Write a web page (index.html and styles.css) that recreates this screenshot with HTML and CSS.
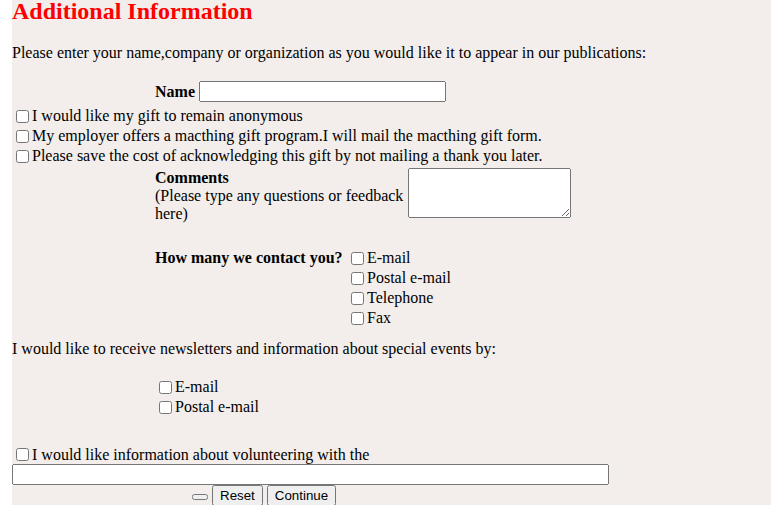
FILE: index.html
```html
<!DOCTYPE html>
<html>
<head>
<meta charset="utf-8">
<title>Additional Information</title>
<link rel="stylesheet" href="styles.css">
</head>
<body>
<form class="page">
  <h2 class="title">Additional Information</h2>
  <p class="intro">Please enter your name,company or organization as you would like it to appear in our publications:</p>

  <div class="name-row">
    <label class="name-label" for="name">Name</label>
    <input class="name-input" type="text" id="name">
  </div>

  <div class="checks">
    <label class="check-row"><input type="checkbox">I would like my gift to remain anonymous</label>
    <label class="check-row"><input type="checkbox">My employer offers a macthing gift program.I will mail the macthing gift form.</label>
    <label class="check-row"><input type="checkbox">Please save the cost of acknowledging this gift by not mailing a thank you later.</label>
  </div>

  <div class="comments-row">
    <div class="comments-label"><b>Comments</b><br>(Please type any questions or feedback here)</div>
    <textarea class="comments-input"></textarea>
  </div>

  <div class="contact">
    <div class="contact-label">How many we contact you?</div>
    <div class="contact-options">
      <label class="check-row"><input type="checkbox">E-mail</label>
      <label class="check-row"><input type="checkbox">Postal e-mail</label>
      <label class="check-row"><input type="checkbox">Telephone</label>
      <label class="check-row"><input type="checkbox">Fax</label>
    </div>
  </div>

  <p class="news">I would like to receive newsletters and information about special events by:</p>
  <div class="news-options">
    <label class="check-row"><input type="checkbox">E-mail</label>
    <label class="check-row"><input type="checkbox">Postal e-mail</label>
  </div>

  <label class="check-row volunteer"><input type="checkbox">I would like information about volunteering with the</label>
  <input class="wide-input" type="text">

  <div class="buttons">
    <button type="button" class="btn btn-empty"></button>
    <button type="reset" class="btn">Reset</button>
    <button type="submit" class="btn">Continue</button>
  </div>
</form>
</body>
</html>
```

FILE: styles.css
```css
html, body {
  margin: 0;
  padding: 0;
  background: #ffffff;
}

body {
  font-family: "Liberation Serif", "Times New Roman", serif;
  font-size: 16px;
  color: #000;
}

.page {
  margin-left: 12px;
  background: #f3eeeb;
  padding-bottom: 0;
}

.title {
  margin: 0 0 22px;
  font-size: 24px;
  line-height: 22px;
  font-weight: bold;
  color: #ff0000;
}

.intro {
  margin: 0;
  line-height: 18px;
}

.name-row {
  display: flex;
  align-items: center;
  margin-top: 19px;
  padding-left: 143px;
}

.name-label {
  font-weight: bold;
}

.name-input {
  margin: 0 0 0 4px;
  width: 247px;
  height: 21px;
  box-sizing: border-box;
  font-family: "Liberation Sans", Arial, sans-serif;
  font-size: 13.33px;
}

.checks {
  margin-top: 4px;
}

.check-row {
  display: flex;
  align-items: center;
  height: 20px;
  white-space: nowrap;
}

.check-row input {
  width: 13px;
  height: 13px;
  margin: 0 3px 0 4px;
}

.comments-row {
  display: flex;
  align-items: flex-start;
  margin-top: 2px;
  padding-left: 143px;
}

.comments-label {
  width: 249px;
  padding-top: 1px;
  line-height: 18px;
}

.comments-input {
  margin: 0 0 0 4px;
  width: 163px;
  height: 50px;
  box-sizing: border-box;
  font-family: "Liberation Mono", monospace;
  font-size: 13.33px;
}

.contact {
  display: grid;
  grid-template-columns: 192px auto;
  margin-top: 25px;
  padding-left: 143px;
}

.contact-label {
  font-weight: bold;
  line-height: 20px;
}

.news {
  margin: 12px 0 0;
  line-height: 18px;
}

.news-options {
  margin-top: 19px;
  padding-left: 143px;
}

.volunteer {
  margin-top: 28px;
  height: 19px;
}

.wide-input {
  display: block;
  margin: 0;
  width: 597px;
  height: 21px;
  box-sizing: border-box;
  font-family: "Liberation Sans", Arial, sans-serif;
  font-size: 13.33px;
}

.buttons {
  display: flex;
  align-items: baseline;
  gap: 4px;
  margin-top: 0;
  padding-left: 180px;
  height: 20px;
}

.btn {
  margin: 0;
  font-family: "Liberation Sans", Arial, sans-serif;
  font-size: 13.33px;
  padding: 1px 6px;
  height: 21px;
}

.btn-empty {
  height: 6px;
  width: 16px;
}
```
